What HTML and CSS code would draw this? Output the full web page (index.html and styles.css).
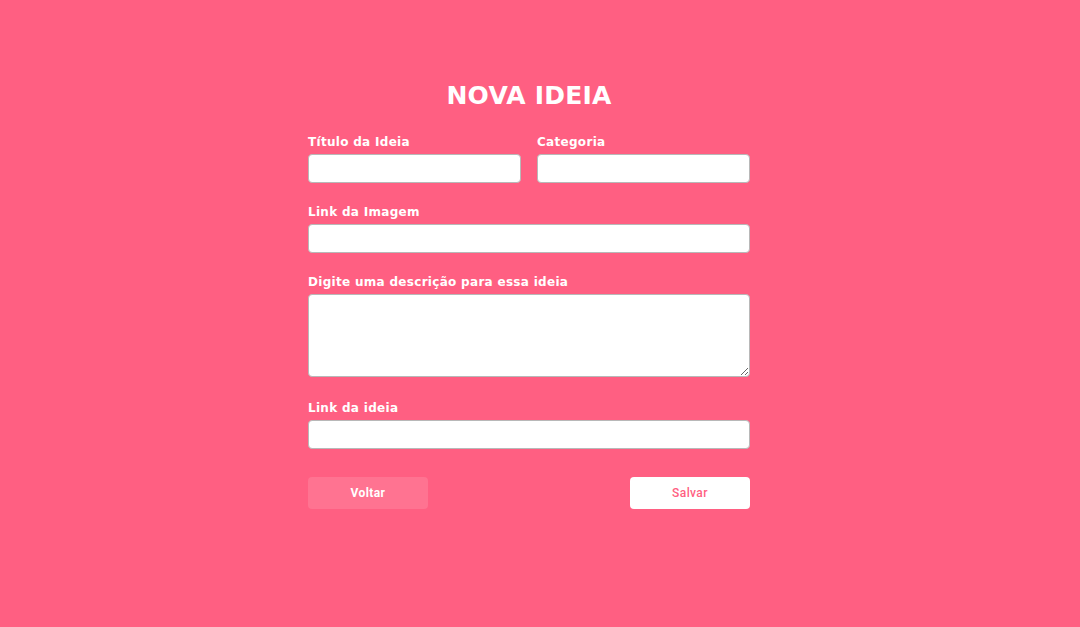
FILE: index.html
```html
<!DOCTYPE html>
<html lang="pt-BR">
<head>
<meta charset="utf-8">
<title>Nova Ideia</title>
<link rel="stylesheet" href="styles.css">
</head>
<body>
<main class="page">
  <form class="idea-form">
    <h1 class="form-title">NOVA IDEIA</h1>
    <div class="row">
      <div class="field">
        <label class="field-label">Título da Ideia</label>
        <input class="field-input" type="text">
      </div>
      <div class="field">
        <label class="field-label">Categoria</label>
        <input class="field-input" type="text">
      </div>
    </div>
    <div class="field">
      <label class="field-label">Link da Imagem</label>
      <input class="field-input" type="text">
    </div>
    <div class="field">
      <label class="field-label">Digite uma descrição para essa ideia</label>
      <textarea class="field-input field-textarea"></textarea>
    </div>
    <div class="field">
      <label class="field-label">Link da ideia</label>
      <input class="field-input" type="text">
    </div>
    <div class="actions">
      <button type="button" class="btn btn-back">Voltar</button>
      <button type="button" class="btn btn-save">Salvar</button>
    </div>
  </form>
</main>
</body>
</html>
```
FILE: styles.css
```css
* { box-sizing: border-box; }
html, body { margin: 0; height: 100%; }
body {
  background: #ff5f82;
  font-family: "DejaVu Sans", "Open Sans", sans-serif;
}
.page {
  display: flex;
  justify-content: center;
  padding: 78px 22px 0 0;
}
.idea-form {
  width: 442px;
  display: flex;
  flex-direction: column;
  gap: 21px;
}
.form-title {
  margin: 0 0 -1px;
  text-align: center;
  color: #fff;
  font-size: 25px;
  line-height: 36px;
  font-weight: 700;
  letter-spacing: 0.2px;
}
.row {
  display: flex;
  gap: 16px;
}
.row .field { flex: 1 1 0; min-width: 0; }
.field {
  display: flex;
  flex-direction: column;
}
.field-label {
  color: #fff;
  font-size: 12px;
  font-weight: 700;
  line-height: 16px;
  margin-bottom: 4px;
  letter-spacing: 0.3px;
}
.field-input {
  width: 100%;
  min-width: 0;
  height: 29px;
  border: 1px solid #b8b8b8;
  border-radius: 4px;
  background: #fff;
  font: inherit;
  padding: 0 8px;
}
.field-textarea {
  height: 83px;
  margin-bottom: 2px;
}
.actions {
  display: flex;
  justify-content: space-between;
  margin-top: 7px;
}
.btn {
  width: 120px;
  height: 32px;
  border: none;
  border-radius: 4px;
  font-family: Roboto, "Liberation Sans", sans-serif;
  font-size: 12px;
  letter-spacing: 0.4px;
  cursor: pointer;
}
.btn-back {
  background: #ff7391;
  color: #fff;
  font-weight: 700;
}
.btn-save {
  background: #fff;
  color: #ff5f82;
  font-weight: 500;
}
```
